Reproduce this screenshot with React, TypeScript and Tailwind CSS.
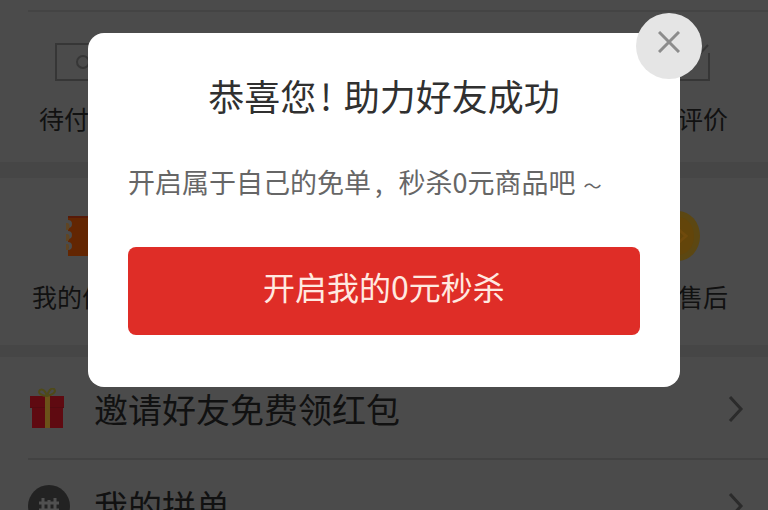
import React from 'react';

const CouponIcon = () => (
  <svg width="32" height="40" viewBox="0 0 32 40" aria-hidden="true">
    <path d="M2 0h28v40H2v-6a4 4 0 0 0 0-8v-3a4 4 0 0 0 0-8v-3a4 4 0 0 0 0-8z" fill="#632602" />
    <path d="M0 7h2a3 4 0 0 1 0 7H0zM0 18h2a3 4 0 0 1 0 7H0zM0 28h2a3 4 0 0 1 0 6H0z" fill="#5f4524" />
    <path d="M2 0h28v2H2z" fill="#571a08" />
  </svg>
);

const CoinIcon = () => (
  <svg width="46" height="50" viewBox="0 0 46 50" aria-hidden="true">
    <ellipse cx="23" cy="25" rx="22" ry="25" fill="#5c4712" />
    <ellipse cx="23" cy="25" rx="16" ry="19" fill="#63450a" />
    <path d="M22 17l9 8-9 8" fill="none" stroke="#6f4a0c" strokeWidth="3" />
  </svg>
);

const WalletIcon = () => (
  <svg width="44" height="38" viewBox="0 0 44 38" fill="none" stroke="#363636" strokeWidth="2" aria-hidden="true">
    <rect x="1" y="1" width="42" height="36" />
    <circle cx="28" cy="19" r="6" />
  </svg>
);

const ReviewIcon = () => (
  <svg width="40" height="38" viewBox="0 0 40 38" fill="none" stroke="#363636" strokeWidth="2" aria-hidden="true">
    <path d="M30 1H1v36h38V10" />
    <path d="M18 24L38 2" />
  </svg>
);

const GiftIcon = () => (
  <svg width="38" height="42" viewBox="0 0 38 42" aria-hidden="true">
    <path d="M2 8h34v12h-1v20H4V20H2z" fill="#5f0a11" />
    <path d="M2 19h34v1H2z" fill="#540a10" />
    <path d="M17 8h5v32h-5z" fill="#6b5219" />
    <path d="M19 8C14 8 9 5 12 2c3-2 6 2 7 6 1-4 4-9 7-7 3 3-2 6-7 7z" fill="none" stroke="#4f4a18" strokeWidth="2" />
  </svg>
);

const GroupIcon = () => (
  <svg width="42" height="42" viewBox="0 0 42 42" aria-hidden="true">
    <circle cx="21" cy="21" r="21" fill="#222" />
    <path d="M11 18h20M11 25h20M15 13v18M21 15v16M27 13v18" fill="none" stroke="#505050" strokeWidth="3" />
  </svg>
);

const Chevron = () => (
  <svg width="16" height="28" viewBox="0 0 16 28" fill="none" stroke="#2b2b2b" strokeWidth="3" aria-hidden="true">
    <path d="M2 2l11 12L2 26" />
  </svg>
);

const orders = [
  { label: '待付款', icon: <WalletIcon /> },
  { label: '待评价', icon: <ReviewIcon /> },
];

const services = [
  { label: '我的优惠', icon: <CouponIcon /> },
  { label: '退款售后', icon: <CoinIcon /> },
];

const menu = [
  { label: '邀请好友免费领红包', icon: <GiftIcon /> },
  { label: '我的拼单', icon: <GroupIcon /> },
];

const Shortcuts: React.FC<{ items: typeof orders; className: string; gap: string }> = ({ items, className, gap }) => (
  <nav className={`flex justify-between ${className}`}>
    {items.map((item) => (
      <a key={item.label} href="#" className={`flex flex-col items-center ${gap}`}>
        <span className="flex h-[52px] items-center">{item.icon}</span>
        <span className="text-[25px] leading-9">{item.label}</span>
      </a>
    ))}
  </nav>
);

const InviteDialog = () => (
  <div className="absolute inset-0 px-[88px] pt-[33px]">
    <div
      role="dialog"
      aria-modal="true"
      aria-labelledby="dialog-title"
      className="relative rounded-2xl bg-white px-10 pt-9 pb-[52px]"
    >
      <button
        type="button"
        aria-label="关闭"
        className="absolute -top-5 -right-[22px] flex size-[66px] items-center justify-center rounded-full bg-[#e5e5e5] pb-2"
      >
        <svg width="22" height="22" viewBox="0 0 22 22" fill="none" stroke="#8c8c8c" strokeWidth="3" aria-hidden="true">
          <path d="M1 1l20 20M21 1L1 21" />
        </svg>
      </button>
      <h1 id="dialog-title" className="text-center text-[36px] leading-[52px] whitespace-nowrap text-[#303030]">
        恭喜您<span className="pr-3 pl-1">!</span>助力好友成功
      </h1>
      <p className="mt-[41px] text-[27px] leading-10 whitespace-nowrap text-[#666]">
        开启属于自己的免单<span className="pr-4 pl-1">,</span>秒杀0元商品吧
        <span className="pl-2 text-[18px] leading-none">～</span>
      </p>
      <button
        type="button"
        className="mt-[45px] h-[88px] w-full rounded-lg bg-[#df2d27] pb-2.5 text-[32px] text-[#ffe9e0]"
      >
        开启我的0元秒杀
      </button>
    </div>
  </div>
);

export default function App() {
  return (
    <div className="relative h-screen overflow-hidden bg-[#4b4b4b] font-['Noto_Sans_CJK_SC',sans-serif] text-[#111]">
      <div className="ml-7 h-3 border-b-2 border-[#444]" />
      <Shortcuts items={orders} className="pt-6 pr-10 pb-[26px] pl-[39px]" gap="gap-3" />
      <div className="h-4 bg-[#464646]" />
      <Shortcuts items={services} className="pt-8 pr-10 pb-[31px] pl-8" gap="gap-4" />
      <div className="h-3 bg-[#464646]" />
      <ul className="pt-1.5">
        {menu.map((item) => (
          <li key={item.label} className="ml-7 border-b-2 border-[#424242]">
            <a href="#" className="flex h-[95px] items-center pr-6 pb-1">
              <span className="flex w-[66px]">{item.icon}</span>
              <span className="flex-1 text-[34px] leading-[50px]">{item.label}</span>
              <Chevron />
            </a>
          </li>
        ))}
      </ul>
      <InviteDialog />
    </div>
  );
}
